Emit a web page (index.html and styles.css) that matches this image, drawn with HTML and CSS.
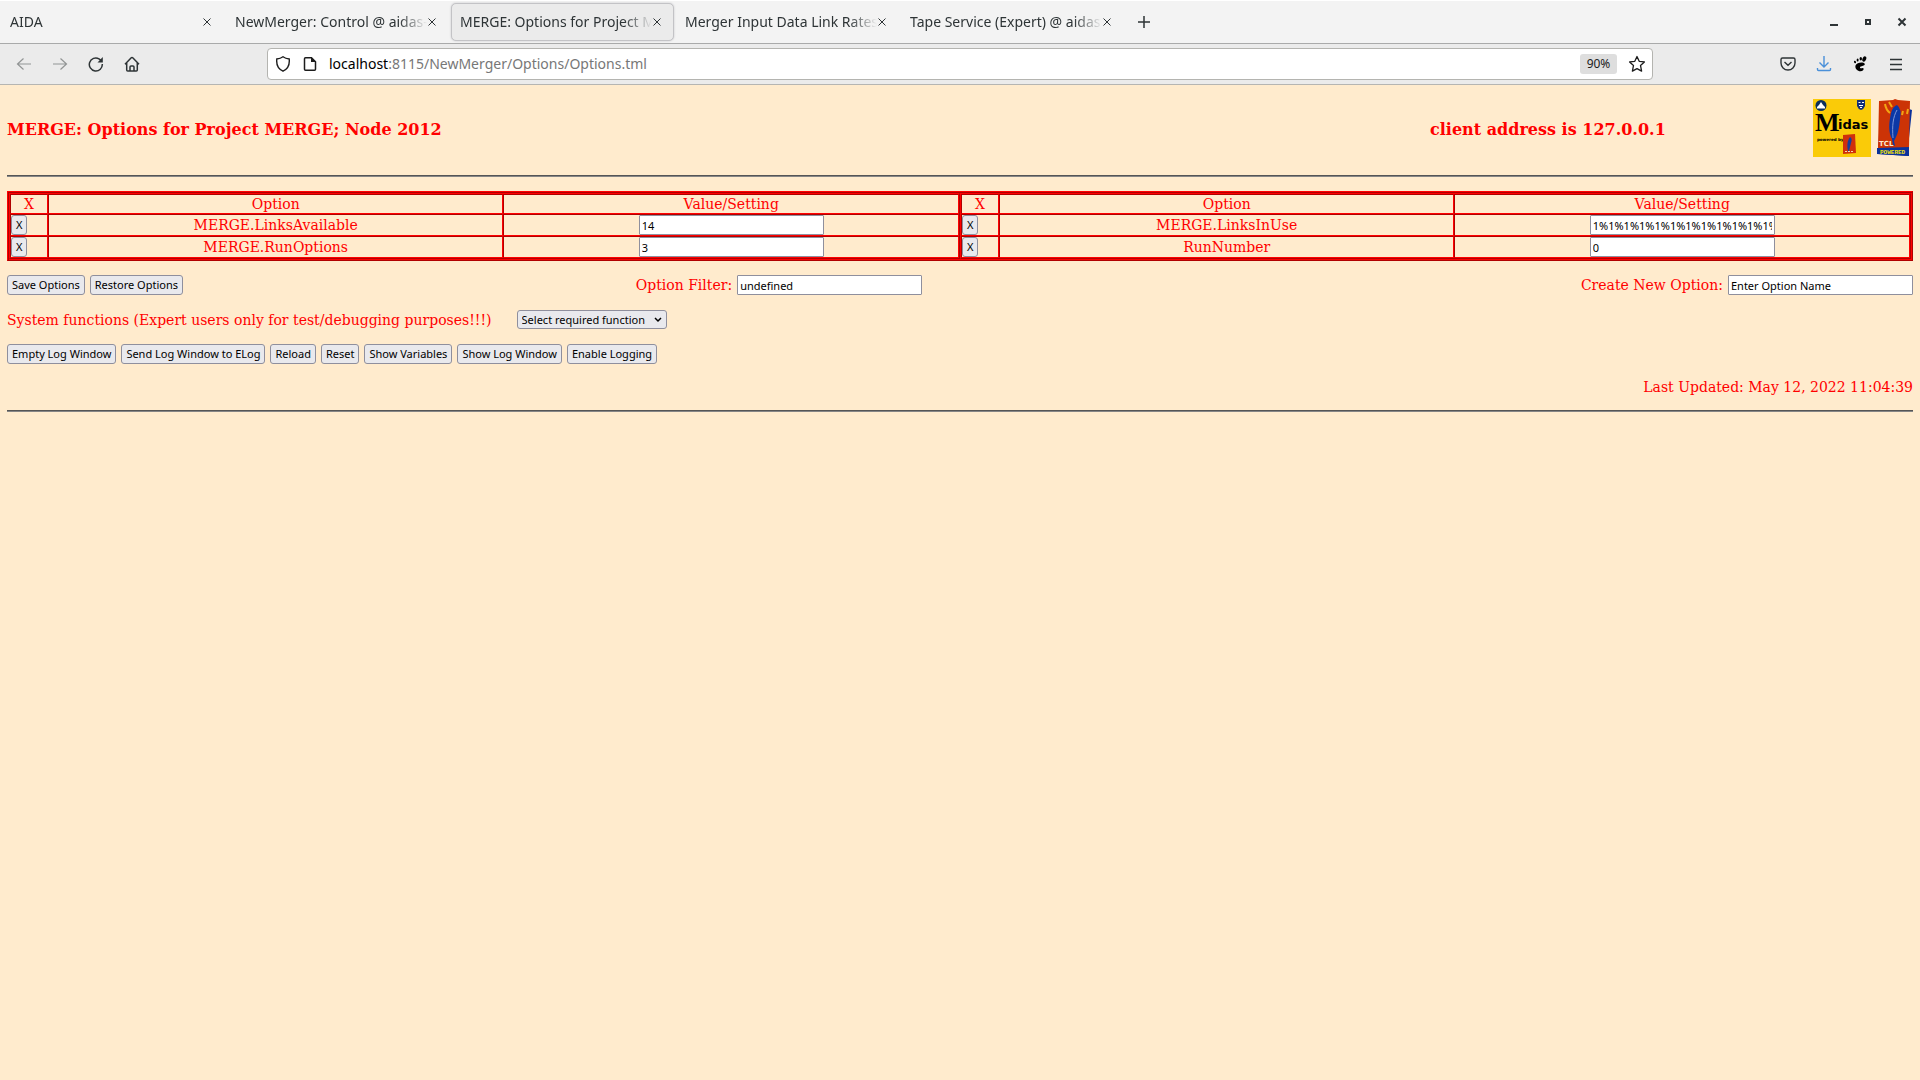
FILE: index.html
```html
<!DOCTYPE html>
<html lang="en">
<head>
<meta charset="utf-8">
<title>MERGE: Options for Project MERGE</title>
<link rel="stylesheet" href="styles.css">
</head>
<body>
<header class="browser">
  <div class="tabbar">
    <div class="tab"><span class="tab-title">AIDA</span><button class="close" aria-label="Close tab"><svg width="8" height="8" viewBox="0 0 8 8"><path d="M.5.5l7 7M7.5.5l-7 7"/></svg></button></div>
    <div class="tab"><span class="tab-title">NewMerger: Control @ aidas-</span><button class="close" aria-label="Close tab"><svg width="8" height="8" viewBox="0 0 8 8"><path d="M.5.5l7 7M7.5.5l-7 7"/></svg></button></div>
    <div class="tab active"><span class="tab-title">MERGE: Options for Project M</span><button class="close" aria-label="Close tab"><svg width="8" height="8" viewBox="0 0 8 8"><path d="M.5.5l7 7M7.5.5l-7 7"/></svg></button></div>
    <div class="tab"><span class="tab-title">Merger Input Data Link Rates</span><button class="close" aria-label="Close tab"><svg width="8" height="8" viewBox="0 0 8 8"><path d="M.5.5l7 7M7.5.5l-7 7"/></svg></button></div>
    <div class="tab"><span class="tab-title">Tape Service (Expert) @ aidas</span><button class="close" aria-label="Close tab"><svg width="8" height="8" viewBox="0 0 8 8"><path d="M.5.5l7 7M7.5.5l-7 7"/></svg></button></div>
    <button class="new-tab" aria-label="New tab"><svg width="12" height="12" viewBox="0 0 12 12"><path d="M6 0v12M0 6h12" stroke-width="1.500"/></svg></button>
    <div class="window-buttons">
      <button aria-label="Minimize"><svg width="10" height="10" viewBox="0 0 10 10"><path d="M1 8h8" stroke-width="2"/></svg></button>
      <button aria-label="Maximize"><svg width="10" height="10" viewBox="0 0 10 10"><path d="M3 3h4v4H3z" stroke-width="2"/></svg></button>
      <button aria-label="Close window"><svg width="10" height="10" viewBox="0 0 10 10"><path d="M1.5 1.5l7 7M8.5 1.5l-7 7" stroke-width="2"/></svg></button>
    </div>
  </div>
  <div class="toolbar">
    <nav class="nav">
      <button class="dim" aria-label="Back"><svg width="16" height="16" viewBox="0 0 16 16"><path d="M15 8H1.5M7.5 2.500L1.500 8l6 5.500" stroke-width="1.200"/></svg></button>
      <button class="dim" aria-label="Forward"><svg width="16" height="16" viewBox="0 0 16 16"><path d="M1 8h13.500M8.500 2.500l6 5.500-6 5.500" stroke-width="1.200"/></svg></button>
      <button aria-label="Reload"><svg width="16" height="16" viewBox="0 0 16 16"><path d="M14.300 8A6.500 6.500 0 1 1 11 2.800l2 1.500" stroke-width="1.500"/><path class="solid" d="M14.800 1v5.500H9.500z"/></svg></button>
      <button aria-label="Home"><svg width="16" height="16" viewBox="0 0 16 16"><path d="M1 8.200L7 2q1-1 2 0l6 6.200M2.700 7v7q0 1 1 1h8.600q1 0 1-1V7M6 15v-4q0-1 1-1h2q1 0 1 1v4" stroke-width="1.500"/></svg></button>
    </nav>
    <div class="urlbar">
      <svg width="16" height="16" viewBox="0 0 16 16"><path d="M8 .8C6 2.300 4 2.800 1.800 3c-.6 5.500 1.200 10 6.200 12.200 5-2.200 6.800-6.700 6.200-12.200C12 2.800 10 2.300 8 .8z" stroke-width="1.400"/></svg>
      <svg width="16" height="16" viewBox="0 0 16 16"><path d="M3.500 1.700h6l4 4v7.600q0 1-1 1h-9q-1 0-1-1V2.700q0-1 1-1z" stroke-width="1.500"/><path class="solid" d="M9 1l5 5H9z"/></svg>
      <a class="url" href="#"><span class="host">localhost</span>:8115/NewMerger/Options/Options.tml</a>
      <button class="zoom">90%</button>
      <svg width="18" height="18" viewBox="0 0 18 18"><path d="M9 1.500l2.200 4.800 5.200.6-3.900 3.500 1.100 5.700L9 13.600l-4.600 2.500 1.100-5.700L1.600 6.900l5.200-.6z" stroke-width="1.300" stroke-linejoin="round"/></svg>
    </div>
    <div class="tools">
      <button aria-label="Save to Pocket"><svg width="16" height="16" viewBox="0 0 16 16"><path d="M2.500 2h11q1.500 0 1.500 1.500V7A7 7 0 0 1 1 7V3.500Q1 2 2.500 2zM4.500 6L8 9.300 11.500 6" stroke-width="1.400"/></svg></button>
      <button class="download" aria-label="Downloads"><svg width="16" height="16" viewBox="0 0 16 16"><path d="M8 0v11M3.500 6.500L8 11l4.500-4.500M1.500 12v1.500q0 1 1 1h11q1 0 1-1V12" stroke-width="1.400"/></svg></button>
      <button aria-label="GNOME extensions"><svg width="16" height="16" viewBox="0 0 16 16"><g class="foot"><ellipse cx="12.300" cy="3" rx="1.800" ry="2.700" transform="rotate(25 12.300 3)"/><ellipse cx="8.800" cy="2.800" rx="1.200" ry="1.800"/><ellipse cx="5.600" cy="4" rx="1" ry="1.500"/><ellipse cx="3" cy="6" rx="1" ry="1.300" transform="rotate(-20 3 6)"/><path d="M12.500 7.500C11 5.500 4.500 6.500 3.500 9.500c-.8 3 2 5.800 5 5.800 2.300 0 3.500-1.700 3-2.800-.6-1.200-2 .2-3-.3-1.200-.7-.3-1.700 1.200-2 1.800-.3 3.800-1.300 2.800-2.700z"/></g></svg></button>
      <button aria-label="Menu"><svg width="14" height="14" viewBox="0 0 14 14"><path d="M1 2.500h12M1 7.500h12M1 12.500h12" stroke-width="1.300"/></svg></button>
    </div>
  </div>
</header>
<main class="page">
  <div class="banner">
    <h1>MERGE: Options for Project MERGE; Node 2012</h1>
    <h2>client address is 127.0.0.1</h2>
    <div class="logos">
      <svg width="58" height="58" viewBox="0 0 58 58" role="img" aria-label="Midas">
        <rect width="58" height="58" fill="#facb08"/>
        <circle cx="8" cy="6.500" r="5.500" fill="#0b2f5c"/>
        <path d="M4 8l2-2 2-3 2 3 2 2v1.500H4z" fill="#fff"/>
        <path d="M44 1h8v6q-1 3-4 4-3-1-4-4z" fill="#132e78"/>
        <path d="M45.500 3.500h2M49 3.500h2M46 6.500h4M47 8.500h2" stroke="#fff" fill="none"/>
        <text class="logo-m" x="2" y="32">M</text>
        <text class="logo-idas" x="25" y="30">idas</text>
        <text class="logo-small" x="4" y="42">powered by</text>
        <path d="M30 36l12-1 1 19-13 1z" fill="#d0300c"/>
        <path d="M35 52c-1-5-1-10 2-14 2 1 2 3 1 6l-2 8" fill="#163f9c"/>
        <path d="M32 52.500h9" stroke="#f1d8b0" stroke-dasharray="2 1"/>
      </svg>
      <svg width="37" height="58" viewBox="0 0 37 58" role="img" aria-label="TCL Powered">
        <path d="M33 10l3 1-3 28v18l-31-2 1-20z" fill="#0a319b"/>
        <path d="M3 2l14-1 2-1 3 1 12 1-1 46-31 1z" fill="#cc3306"/>
        <path d="M16 40C12 33 13 23 15 14q2-7 6-8 5 4 3 14-1 12-4 18l-2 4 1 5-2-1z" fill="#0b38a6"/>
        <path d="M17 39c-1-12 0-21 4-28" stroke="#7d96d9" fill="none"/>
        <path d="M9 5q1 6 5 9M13 3l3 5M27 12l-1 4M32 10l-1 5" stroke="#f3a513" stroke-width="2" fill="none"/>
        <path d="M1 49h32v8L1 55z" fill="#0a319b"/>
        <text class="logo-tcl" x="3" y="47">TCL</text>
        <text class="logo-powered" x="4" y="55">POWERED</text>
      </svg>
    </div>
  </div>
  <hr>
  <div class="options">
    <table>
      <tr><th class="col-x">X</th><th>Option</th><th>Value/Setting</th></tr>
      <tr><td class="del"><button>X</button></td><td><label for="o1">MERGE.LinksAvailable</label></td><td><input id="o1" type="text" value="14"></td></tr>
      <tr><td class="del"><button>X</button></td><td><label for="o2">MERGE.RunOptions</label></td><td><input id="o2" type="text" value="3"></td></tr>
    </table>
    <table>
      <tr><th class="col-x">X</th><th>Option</th><th>Value/Setting</th></tr>
      <tr><td class="del"><button>X</button></td><td><label for="o3">MERGE.LinksInUse</label></td><td><input id="o3" type="text" value="1%1%1%1%1%1%1%1%1%1%1%1%1%1"></td></tr>
      <tr><td class="del"><button>X</button></td><td><label for="o4">RunNumber</label></td><td><input id="o4" type="text" value="0"></td></tr>
    </table>
  </div>
  <div class="actions">
    <div class="group"><button>Save Options</button><button>Restore Options</button></div>
    <div class="group middle"><label for="filter">Option Filter:</label><input id="filter" type="text" value="undefined"></div>
    <div class="group end"><label for="create">Create New Option:</label><input id="create" type="text" value="Enter Option Name"></div>
  </div>
  <div class="system">
    <label for="fn">System functions (Expert users only for test/debugging purposes!!!)</label>
    <div class="select-wrap"><select id="fn"><option>Select required function</option></select><svg width="8" height="6" viewBox="0 0 8 6"><path d="M1 1l3 3 3-3" stroke-width="1.500"/></svg></div>
  </div>
  <div class="group log">
    <button>Empty Log Window</button><button>Send Log Window to ELog</button><button>Reload</button><button>Reset</button><button>Show Variables</button><button>Show Log Window</button><button>Enable Logging</button>
  </div>
  <p class="updated">Last Updated: May 12, 2022 11:04:39</p>
  <hr>
</main>
</body>
</html>
```
FILE: styles.css
```css
* { box-sizing: border-box; }

body {
  margin: 0;
  min-height: 100vh;
  background: #ffebcd;
  color: #f00;
  font: 14px/18px "DejaVu Serif", serif;
}

button, input, select {
  margin: 0;
  font: 11px/16px "Noto Sans", sans-serif;
  color: #000;
}

/* browser chrome */
.browser {
  font: 14px/20px "Noto Sans", sans-serif;
  color: #2e3436;
}

.browser svg {
  flex: none;
  fill: none;
  stroke: currentColor;
}

.browser .solid { fill: currentColor; stroke: none; }
.browser .foot { fill: #000; stroke: none; }

.browser button {
  display: flex;
  align-items: center;
  justify-content: center;
  padding: 0;
  border: 0;
  background: none;
  color: inherit;
}

.tabbar {
  display: flex;
  align-items: center;
  gap: 2px;
  height: 44px;
  padding: 0 0 0 1px;
  background: #f3f3f3;
  border-top: 1px solid #fff;
  border-bottom: 1px solid #a9aaaa;
}

.tab {
  display: flex;
  align-items: center;
  width: 223px;
  height: 38px;
  padding: 0 12px 0 8px;
  border: 1px solid transparent;
  border-radius: 5px;
}

.tab.active {
  background: #ebebeb;
  border-color: #c3c3c6;
  box-shadow: 0 0 2px #c3c3c6;
}

.tab-title {
  flex: 1;
  min-width: 0;
  white-space: nowrap;
  mask-image: linear-gradient(to left, transparent, #000 28px);
}

.close { width: 9px; height: 20px; }

.browser .new-tab { width: 32px; height: 32px; margin-left: 2px; }

.window-buttons {
  display: flex;
  gap: 10px;
  margin-left: auto;
  padding-right: 6px;
}

.window-buttons button { width: 24px; height: 24px; }

.toolbar {
  display: flex;
  align-items: center;
  height: 41px;
  background: #ebebeb;
  border-bottom: 1px solid #b5b5b2;
}

.nav { display: flex; flex: 0 0 267px; gap: 4px; padding-left: 8px; }
.nav button, .tools button { width: 32px; height: 32px; }
.browser .dim { color: #929595; }

.urlbar {
  display: flex;
  align-items: center;
  flex: 1;
  gap: 11px;
  height: 32px;
  padding: 0 6px 0 7px;
  border: 1px solid #b4b4b0;
  border-radius: 4px;
  background: #fff;
  color: #1c1c1c;
}

.url {
  flex: 1;
  font-size: 14px;
  color: #777;
  text-decoration: none;
}

.host { color: #000; }

.browser .zoom {
  width: 37px;
  height: 20px;
  border-radius: 3px;
  background: #dedede;
  font-size: 12px;
}

.tools { display: flex; flex: 0 0 267px; gap: 4px; justify-content: flex-end; padding-right: 8px; }
.browser .download { color: #4a90d9; }

/* page */
.page { padding: 14px 7px; }

.banner {
  display: flex;
  align-items: center;
  height: 58px;
}

.banner h1, .banner h2 {
  flex: 1;
  margin: 0;
  padding-top: 4px;
  font-size: 16px;
  line-height: 22px;
}

.banner h2 { flex: 0 0 383px; }

.logos { display: flex; gap: 5px; }

.logo-m { font: bold 26px "Liberation Serif", serif; }
.logo-idas { font: bold 13px "DejaVu Sans", sans-serif; }
.logo-small { font: bold 4px "DejaVu Sans", sans-serif; }
.logo-tcl { font: bold 7px "DejaVu Sans", sans-serif; fill: #fbe9d0; }
.logo-powered { font: bold 6px "Liberation Mono", monospace; fill: #f3e20a; }

hr {
  height: 2px;
  margin: 0;
  border: 0;
  border-top: 1px solid #555;
  border-bottom: 1px solid #868686;
}

.banner + hr { margin: 18px 0 14px; }

.options {
  display: flex;
  padding: 1px;
  border: 1px solid;
  border-color: #f00 #b00000 #b00000 #f00;
  box-shadow: inset 1px 1px #b00000, inset -1px -1px #f00;
}

.options table {
  width: 50%;
  table-layout: fixed;
  border: 1px solid;
  border-color: #f00 #b00000 #b00000 #f00;
  border-spacing: 0;
}

.options th, .options td {
  height: 22px;
  padding: 0;
  border: 1px solid;
  border-color: #b00000 #f00 #f00 #b00000;
  font-weight: normal;
  text-align: center;
}

.options th { height: 20px; }
.options .col-x { width: 4%; }
.options .del { text-align: left; }

.page button {
  height: 20px;
  padding: 0 4px;
  border: 1px solid #8f8f9d;
  border-radius: 3px;
  background: #e9e9ed;
  white-space: nowrap;
}

.page input {
  width: 185px;
  height: 20px;
  padding: 0 2px;
  border: 1px solid #8f8f9d;
  border-radius: 1px;
  background: #fff;
}

.options button, .options input { display: block; }
.options input { margin: 0 auto; }

.group { display: flex; gap: 5px; align-items: center; }

.actions {
  display: grid;
  grid-template-columns: 22fr 37fr 41fr;
  margin: 14px 0 15px;
}

.middle { justify-content: center; }
.end { justify-content: flex-end; }

.system { display: flex; gap: 25px; align-items: center; }

.select-wrap { display: grid; align-items: center; color: #000; }

.select-wrap select {
  grid-area: 1 / 1;
  width: 150px;
  height: 19px;
  padding: 0 4px;
  border: 1px solid #8f8f9d;
  border-radius: 3px;
  background: #e9e9ed;
  appearance: none;
}

.select-wrap svg {
  grid-area: 1 / 1;
  justify-self: end;
  margin-right: 5px;
  fill: none;
  stroke: #000;
  pointer-events: none;
}

.log { margin: 15px 0 14px; }

.updated { margin: 0 0 14px; text-align: right; }
```
